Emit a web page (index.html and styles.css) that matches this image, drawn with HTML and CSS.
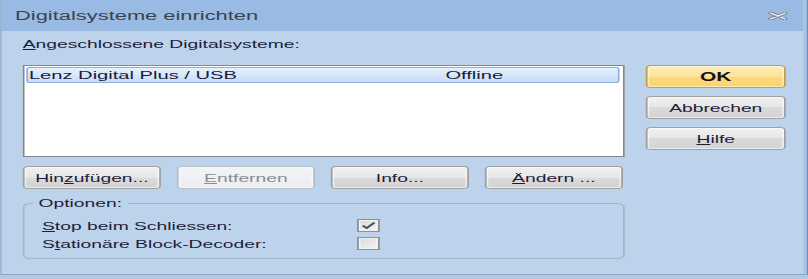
FILE: index.html
```html
<!DOCTYPE html>
<html lang="de">
<head>
<meta charset="utf-8">
<title>Digitalsysteme einrichten</title>
<link rel="stylesheet" href="styles.css">
</head>
<body>
<div class="window">
  <div class="titlebar">
    <span class="title">Digitalsysteme einrichten</span>
    <svg class="close" viewBox="0 0 11 8" width="11" height="8">
      <path d="M1.5 1.2 L9.5 6.8 M9.5 1.2 L1.5 6.8" stroke="#7c8591" stroke-width="3" stroke-linecap="round" fill="none"/>
      <path d="M1.5 1.2 L9.5 6.8 M9.5 1.2 L1.5 6.8" stroke="#e9ebee" stroke-width="1.4" stroke-linecap="round" fill="none"/>
    </svg>
  </div>
  <div class="body">
    <div class="left">
      <div class="label"><u>A</u>ngeschlossene Digitalsysteme:</div>
      <div class="listbox">
        <div class="row selected"><span class="c1">Lenz Digital Plus / USB</span><span class="c2">Offline</span></div>
      </div>
      <div class="btnrow">
        <div class="btn">Hin<u>z</u>ufügen...</div>
        <div class="btn disabled"><u>E</u>ntfernen</div>
        <div class="btn">Info...</div>
        <div class="btn"><u>Ä</u>ndern ...</div>
      </div>
      <fieldset class="group">
        <legend>Optionen:</legend>
        <div class="opt">
          <span><u>S</u>top beim Schliessen:</span>
          <span class="check">
            <svg viewBox="0 0 11 11" width="11" height="11"><path d="M2.3 5.6 L4.6 8 L9 2.6" stroke="#505256" stroke-width="1.6" fill="none"/></svg>
          </span>
        </div>
        <div class="opt">
          <span>S<u>t</u>ationäre Block-Decoder:</span>
          <span class="check"></span>
        </div>
      </fieldset>
    </div>
    <div class="right">
      <div class="btn ok">OK</div>
      <div class="btn">Abbrechen</div>
      <div class="btn"><u>H</u>ilfe</div>
    </div>
  </div>
</div>
</body>
</html>
```

FILE: styles.css
```css
html, body {
  margin: 0;
  padding: 0;
  overflow: hidden;
  background: #b3c9e3;
}

.window {
  width: 461.7px;
  height: 275px;
  box-sizing: border-box;
  transform: scaleX(1.75);
  transform-origin: 0 0;
  display: flex;
  flex-direction: column;
  border-left: 1px solid #9ab3d1;
  border-right: 1px solid #7190b6;
  border-bottom: 1px solid #8da6c3;
  background: #a9c6e8;
  font-family: "Liberation Sans", Arial, sans-serif;
  font-size: 11px;
  color: #1d1d3b;
}

.titlebar {
  height: 31px;
  flex: none;
  margin-right: 2px;
  background: #99bae2;
  display: flex;
  align-items: center;
  padding-left: 7.6px;
}

.title {
  flex: 1;
  font-size: 12.5px;
  color: #39424e;
  padding-top: 1px;
}

.close {
  margin-right: 9px;
  display: block;
}

.body {
  flex: 1;
  margin-right: 2px;
  background: #bcd3eb;
  padding: 7px 0 0 12px;
  display: flex;
  gap: 12px;
}

.left {
  width: 344px;
  display: flex;
  flex-direction: column;
}

.label {
  height: 13px;
  line-height: 13px;
}

.listbox {
  margin-top: 14px;
  height: 92px;
  box-sizing: border-box;
  border: 1px solid #828790;
  background: #ffffff;
  padding: 1px 2px 0 1px;
}

.row {
  height: 16px;
  box-sizing: border-box;
  border: 1px solid #8eb1dc;
  border-radius: 2px;
  background: linear-gradient(#e8f1fd, #c6dcf9);
  display: flex;
  align-items: center;
  font-size: 11.5px;
  color: #1a1a38;
}

.c1 {
  width: 238px;
  padding-left: 0.5px;
}

.btnrow {
  margin-top: 9px;
  display: flex;
  gap: 9px;
}

.btn {
  width: 79px;
  height: 23px;
  box-sizing: border-box;
  border: 1px solid #a0a0a0;
  border-radius: 3px;
  background: linear-gradient(#f1f1f1, #e6e6e6 50%, #dadada 50%, #d3d3d3);
  box-shadow: inset 0 0 0 1px rgba(255, 255, 255, 0.55);
  display: flex;
  align-items: center;
  justify-content: center;
  color: #1d1d3b;
}

.btn.disabled {
  border-color: #b8bfc8;
  background: linear-gradient(#f3f4f6, #eaedf0);
  color: #8a8c90;
}

.group {
  margin: 7.5px 0 0 0;
  padding: 0 0 5px 5px;
  min-width: 0;
  width: 344px;
  box-sizing: border-box;
  border: 1px solid #a4b6ca;
  border-radius: 4px;
}

.group legend {
  padding: 0 3px;
  line-height: 13px;
}

.opt {
  display: grid;
  grid-template-columns: 180px 13px;
  align-items: center;
  height: 18px;
  padding-left: 5px;
}

.opt:first-of-type {
  margin-top: 7px;
}

.check {
  width: 13px;
  height: 13px;
  box-sizing: border-box;
  border: 1px solid #8e8f8f;
  background: linear-gradient(135deg, #d5d8dc, #f6f6f6);
  box-shadow: inset 0 0 0 1px #f0f1f2;
  display: flex;
  align-items: center;
  justify-content: center;
}

.check svg {
  display: block;
}

.right {
  width: 80px;
  padding-top: 27px;
  display: flex;
  flex-direction: column;
  gap: 8px;
}

.right .btn {
  width: 80px;
}

.btn.ok {
  border-color: #c2a051;
  background: linear-gradient(#fdefbd, #fde39a 50%, #fcd97a 50%, #fbd470);
  box-shadow: inset 0 0 0 1px rgba(255, 250, 225, 0.6);
  font-weight: bold;
  font-size: 12px;
  color: #141414;
}

u {
  text-decoration-thickness: 1px;
  text-underline-offset: 1px;
}
```
